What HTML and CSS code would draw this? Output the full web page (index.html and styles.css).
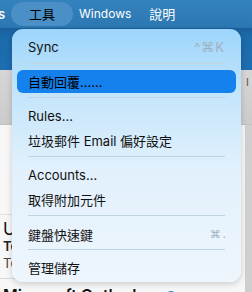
FILE: index.html
```html
<!DOCTYPE html>
<html lang="zh-Hant">
<head>
    <meta charset="UTF-8">
    <title>Outlook 工具</title>
    <link rel="stylesheet" href="styles.css">
</head>
<body>

    <!-- Barra de menu -->
    <div class="menubar">
        <span class="mb-item mb-cut">s</span>
        <span class="mb-item mb-active">工具</span>
        <span class="mb-item mb-win">Windows</span>
        <span class="mb-item mb-help">說明</span>
    </div>

    <!-- Janela por trás -->
    <div class="window">
        <div class="ribbon-top"></div>
        <div class="toolbar"><span class="tb-mark">I</span></div>
        <div class="content">
            <div class="list">
                <div class="row-gap"></div>
                <div class="msg">
                    <div class="msg-from">U</div>
                    <div class="msg-line">Te</div>
                    <div class="msg-line light">Te</div>
                </div>
                <div class="msg-next">Microsoft Outlook <span class="dot"></span></div>
            </div>
            <div class="divider"></div>
            <div class="scroll"></div>
        </div>
    </div>

    <!-- Menu suspenso -->
    <div class="menu">
        <div class="item"><span>Sync</span><span class="key">^⌘K</span></div>
        <div class="sep"></div>
        <div class="item selected"><span>自動回覆......</span></div>
        <div class="sep"></div>
        <div class="item"><span>Rules...</span></div>
        <div class="item"><span>垃圾郵件 Email 偏好設定</span></div>
        <div class="sep"></div>
        <div class="item"><span>Accounts...</span></div>
        <div class="item"><span>取得附加元件</span></div>
        <div class="sep"></div>
        <div class="item"><span>鍵盤快速鍵</span><span class="key small">⌘.</span></div>
        <div class="sep tight"></div>
        <div class="item"><span>管理儲存</span></div>
    </div>

</body>
</html>
```

FILE: styles.css
```css
/* Estilos Gerais */
* {
    box-sizing: border-box;
    margin: 0;
    padding: 0;
    font-family: 'Inter', 'Noto Sans CJK TC', sans-serif;
}

body {
    width: 252px;
    height: 292px;
    overflow: hidden;
    position: relative;
    background: #f6f6f6;
}

/* Barra de menu */
.menubar {
    height: 28px;
    background: linear-gradient(to bottom, #3482bd, #2b77b2);
    display: flex;
    align-items: center;
    font-size: 13px;
    color: #fff;
}

.mb-item {
    line-height: 24px;
}

.mb-cut {
    width: 11px;
    text-indent: -2px;
    overflow: hidden;
    font-weight: 600;
}

.mb-active {
    background: #4a8fc6;
    border-radius: 12px;
    width: 62px;
    text-align: center;
    color: #000;
    font-size: 13px;
}

.mb-win {
    margin-left: 6px;
    font-size: 12px;
}

.mb-help {
    margin-left: 18px;
}

/* Janela */
.window {
    height: 264px;
    display: flex;
    flex-direction: column;
    overflow: hidden;
}

.ribbon-top {
    height: 42px;
    flex-shrink: 0;
    background: linear-gradient(to bottom, #1a5f9c, #1b6aab 20%, #1d6db0);
}

.toolbar {
    height: 55px;
    flex-shrink: 0;
    background: linear-gradient(to bottom, #d6d6d6, #cbcbcb);
    border-bottom: 1px solid #c2c2c2;
    display: flex;
    justify-content: flex-end;
    align-items: center;
}

.tb-mark {
    font-size: 11px;
    color: #555;
    margin-right: 3px;
    margin-top: -30px;
}

.content {
    flex: 1;
    display: flex;
    background: #f7f7f7;
    overflow: hidden;
}

.list {
    flex: 1;
    display: flex;
    flex-direction: column;
}

.row-gap {
    height: 90px;
    flex-shrink: 0;
    border-bottom: 1px solid #e0e0e0;
}

.msg {
    padding: 5px 0 0 3px;
    height: 64px;
    flex-shrink: 0;
    border-bottom: 1px solid #dadada;
}

.msg-from {
    font-size: 17px;
    line-height: 18px;
    color: #111;
}

.msg-line {
    font-size: 13px;
    line-height: 17px;
    font-weight: 600;
    color: #222;
}

.msg-line.light {
    font-weight: 400;
    color: #444;
}

.msg-next {
    flex-shrink: 0;
    padding: 6px 0 0 3px;
    font-size: 16px;
    line-height: 20px;
    font-weight: 600;
    color: #111;
    display: flex;
    align-items: center;
    gap: 26px;
}

.dot {
    width: 8px;
    height: 8px;
    border-radius: 50%;
    background: #2b7fd8;
}

.divider {
    width: 8px;
    background: #f7f7f7;
}

.scroll {
    width: 7px;
    background: #cfcfcf;
}

/* Menu */
.menu {
    position: absolute;
    left: 12px;
    top: 29px;
    width: 229px;
    height: 253px;
    overflow: hidden;
    border-radius: 11px;
    background: linear-gradient(to bottom, #9dd5fb 0%, #c3e5fb 25%, #e1f0fc 55%, #eef6fd 100%);
    box-shadow: 0 2px 6px rgba(0, 0, 0, 0.18);
    padding: 6px 5px;
    display: flex;
    flex-direction: column;
}

.item {
    height: 24px;
    flex-shrink: 0;
    display: flex;
    align-items: center;
    justify-content: space-between;
    padding: 0 11px;
    font-size: 13px;
    color: #111;
    border-radius: 6px;
}

.item.selected {
    height: 23px;
    background: #1581ec;
    color: #000;
}

.key {
    color: #9fb1bf;
    font-size: 13px;
    letter-spacing: 1px;
}

.key.small {
    font-size: 11px;
    letter-spacing: 2px;
    margin-right: -3px;
}

.sep {
    height: 1px;
    flex-shrink: 0;
    margin: 4px 11px 6px;
    background: #bfd3e2;
}

.sep.tight {
    margin: 3px 11px 5px;
}
```
